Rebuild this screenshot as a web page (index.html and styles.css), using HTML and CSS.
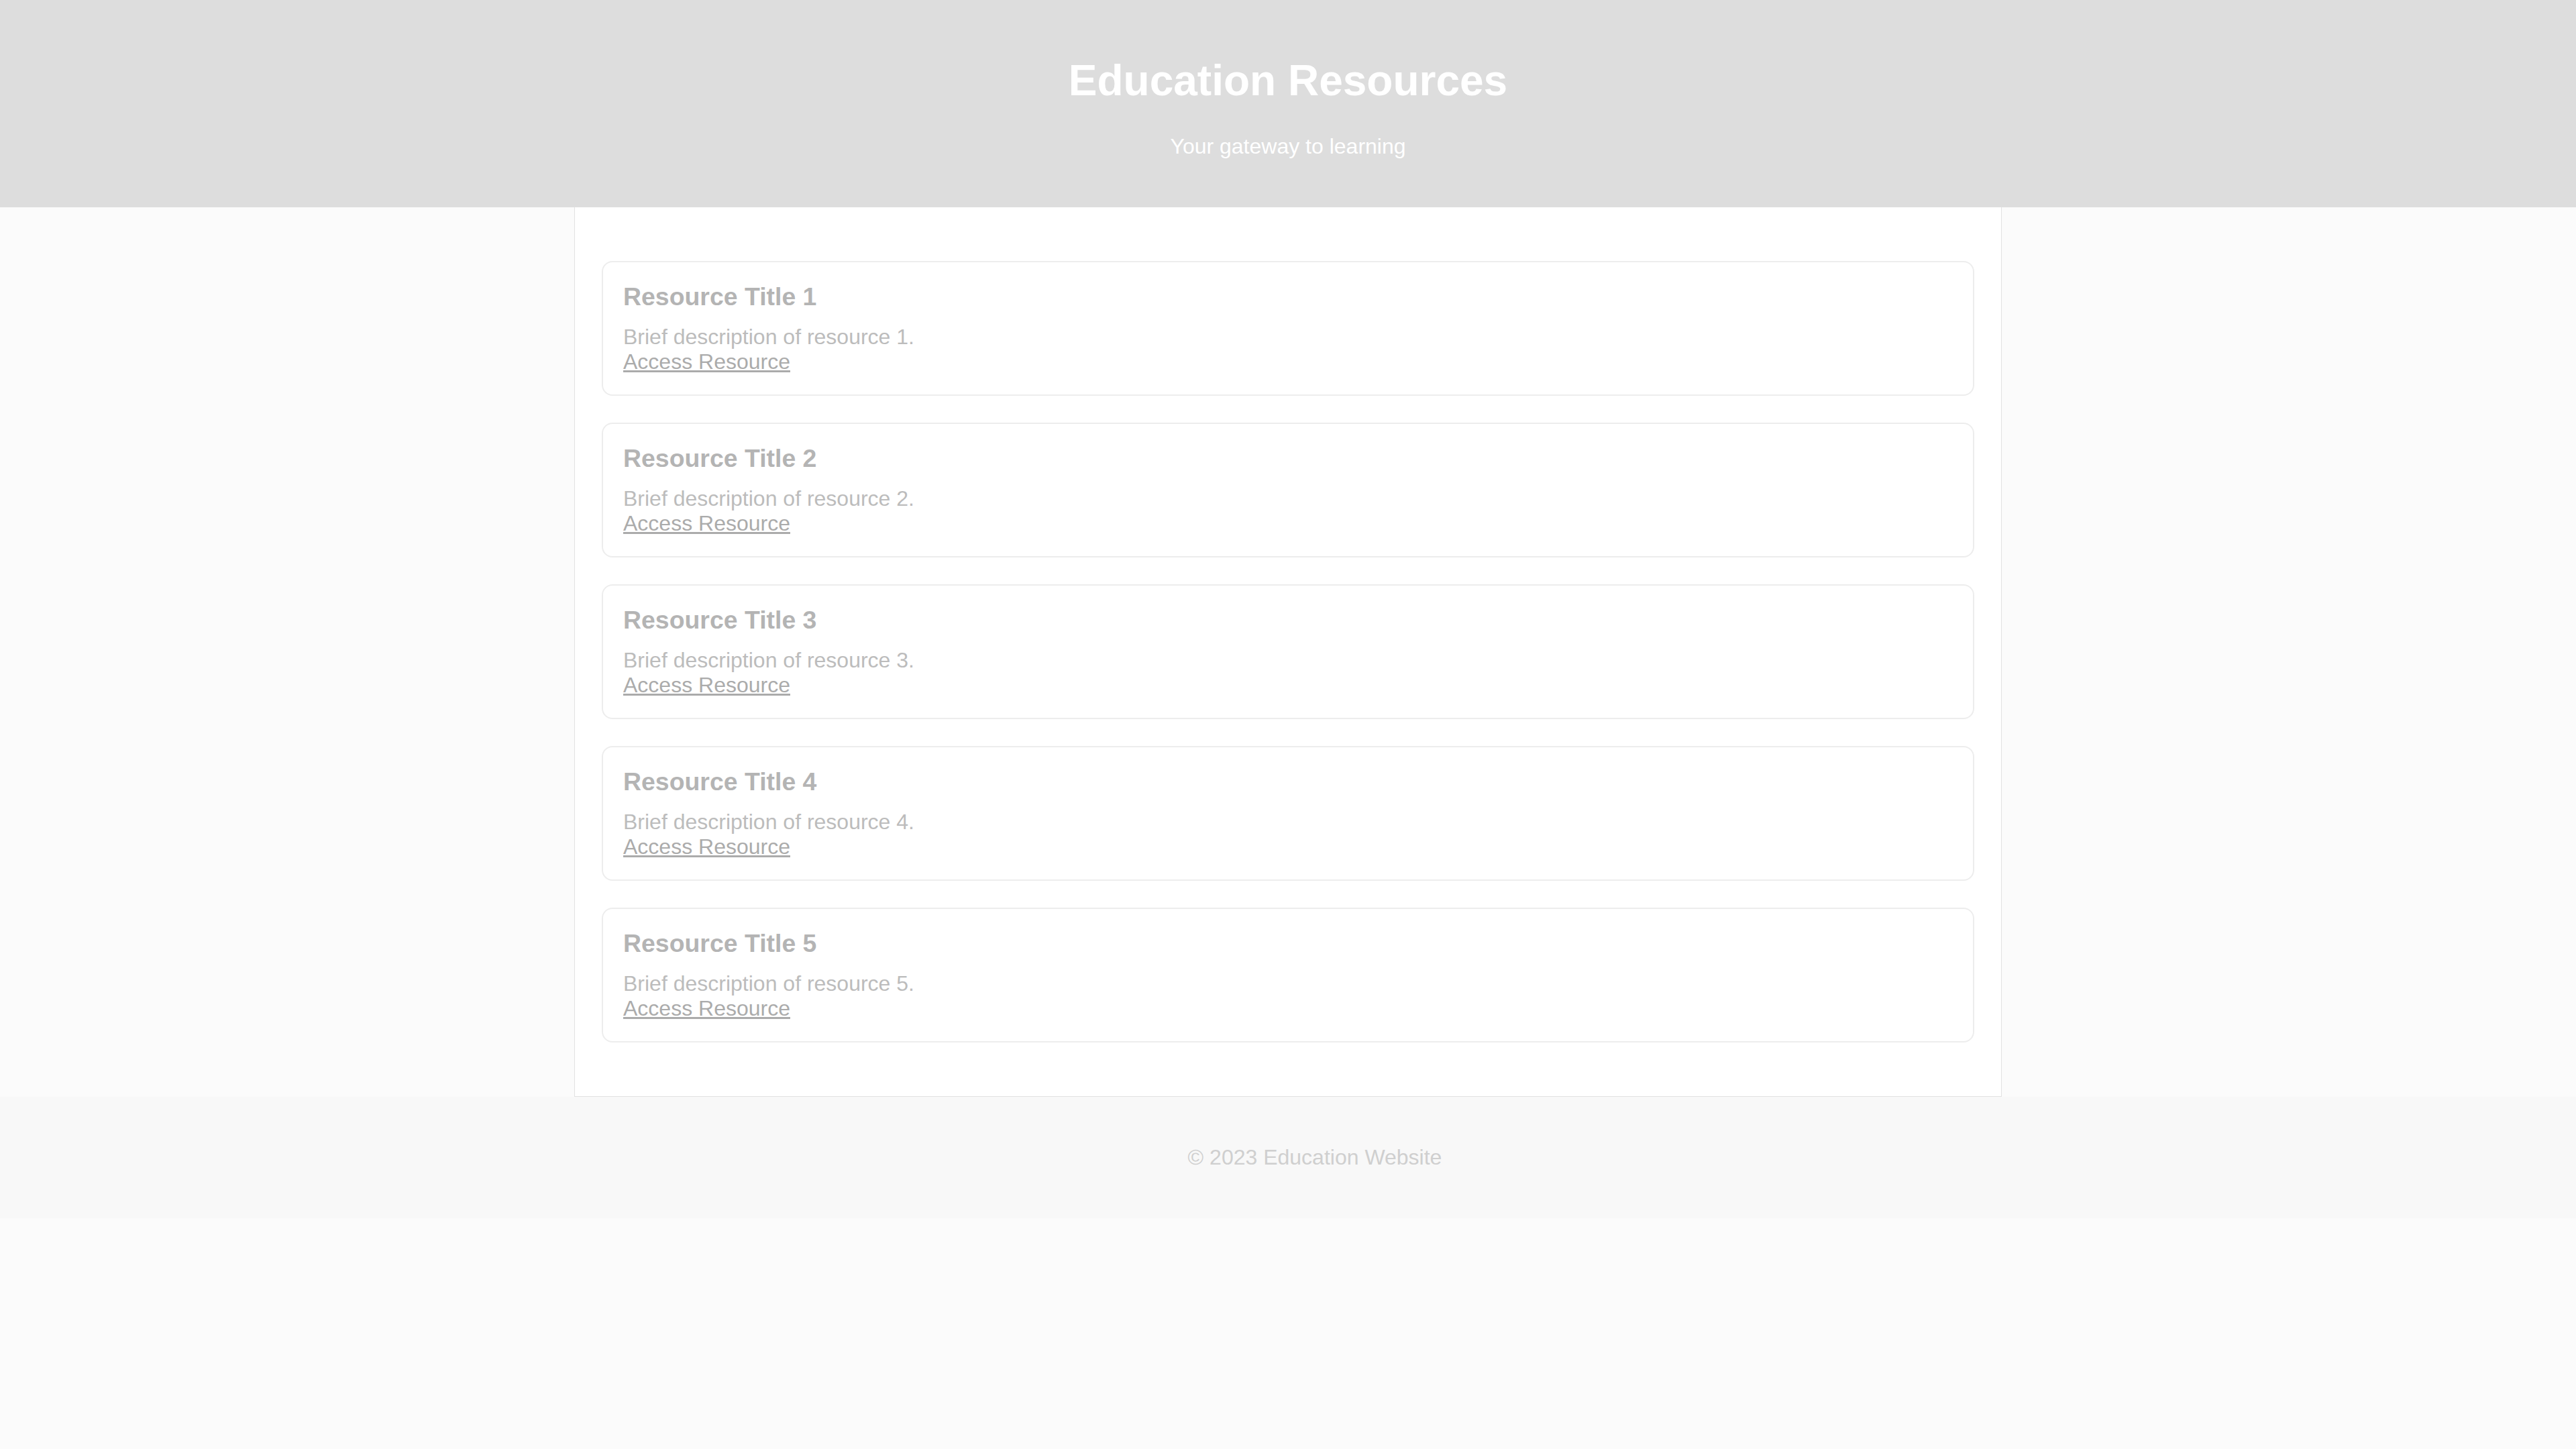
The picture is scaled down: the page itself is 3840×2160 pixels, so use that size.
FILE: index.html
```html
<!DOCTYPE html>
<html lang="en">
<head>
<meta charset="utf-8">
<title>Education Resources</title>
<link rel="stylesheet" href="styles.css">
</head>
<body>
<header class="site-header">
  <h1 class="site-title">Education Resources</h1>
  <p class="site-tagline">Your gateway to learning</p>
</header>
<main class="container">
  <section class="resource">
    <h3 class="resource-title">Resource Title 1</h3>
    <p class="resource-desc">Brief description of resource 1.</p>
    <a class="resource-link" href="#">Access Resource</a>
  </section>
  <section class="resource">
    <h3 class="resource-title">Resource Title 2</h3>
    <p class="resource-desc">Brief description of resource 2.</p>
    <a class="resource-link" href="#">Access Resource</a>
  </section>
  <section class="resource">
    <h3 class="resource-title">Resource Title 3</h3>
    <p class="resource-desc">Brief description of resource 3.</p>
    <a class="resource-link" href="#">Access Resource</a>
  </section>
  <section class="resource">
    <h3 class="resource-title">Resource Title 4</h3>
    <p class="resource-desc">Brief description of resource 4.</p>
    <a class="resource-link" href="#">Access Resource</a>
  </section>
  <section class="resource">
    <h3 class="resource-title">Resource Title 5</h3>
    <p class="resource-desc">Brief description of resource 5.</p>
    <a class="resource-link" href="#">Access Resource</a>
  </section>
</main>
<footer class="site-footer">
  <p class="footer-text">&copy; 2023 Education Website</p>
</footer>
</body>
</html>
```
FILE: styles.css
```css
html {
  overflow-x: hidden;
}

body {
  margin: 0;
  font-family: "Liberation Sans", Arial, sans-serif;
  font-size: 32px;
  background: #fbfbfb;
  color: #bdbdbd;
}

.site-header {
  background: #dddddd;
  color: #ffffff;
  text-align: center;
  padding: 40px;
}

.site-title {
  font-size: 64px;
  font-weight: bold;
  margin: 42.88px 0;
}

.site-tagline {
  margin: 32px 0;
}

.container {
  max-width: 2046px;
  margin: 0 auto;
  padding: 40px;
  background: #ffffff;
  border: 1px solid #e2e2e2;
  border-top: none;
}

.resource {
  margin: 40px 0;
  padding: 30px;
  border: 2px solid #ededed;
  border-radius: 16px;
  background: #ffffff;
}

.resource-title {
  font-size: 37.44px;
  font-weight: bold;
  color: #b4b4b4;
  margin: 0 0 20px;
}

.resource-desc {
  margin: 0;
  color: #bcbcbc;
}

.resource-link {
  color: #ababab;
  text-decoration: underline;
}

.site-footer {
  width: 100%;
  padding: 40px;
  background: #f8f8f8;
  text-align: center;
  color: #cfcfcf;
}

.footer-text {
  margin: 32px 0;
}
```
